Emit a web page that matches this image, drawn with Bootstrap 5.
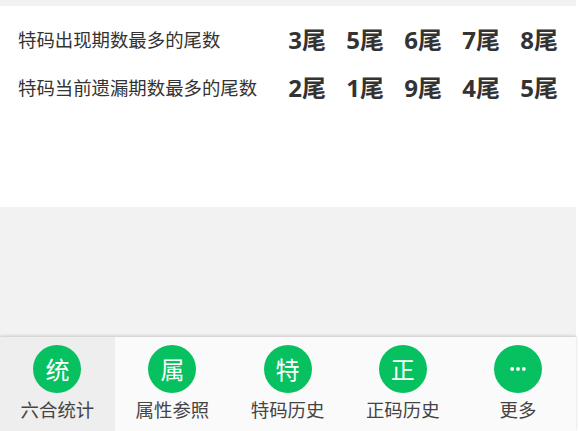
<!DOCTYPE html>
<html lang="zh">
<head>
<meta charset="utf-8">
<link href="https://cdn.jsdelivr.net/npm/bootstrap@5.3.0/dist/css/bootstrap.min.css" rel="stylesheet">
<style>
html, body { height: 100%; overflow: hidden; background: #fff; }
body { font-family: "Noto Sans CJK SC", "Open Sans", sans-serif; color: #333; }
.shell { width: 576px; height: 431px; background: #f2f2f2; }
.panel { margin-top: 6px; height: 201px; background: #fff; padding: 10px 0 0 18px; }
.stat-row { height: 48px; }
.stat-label { font-size: 18.4px; width: 250px; flex: none; }
.stat-vals { font-family: "Open Sans", "Noto Sans CJK SC", sans-serif; font-size: 24px; font-weight: 700; }
.stat-val { width: 58px; flex: none; text-align: right; display: block; }
.tabs { height: 94px; background: #fafafa; box-shadow: 0 -1px 3px rgba(0,0,0,.18); }
.tab-item { width: 115.2px; flex: none; color: #444; font-size: 18.4px; padding-top: 8px; }
.tab-item.is-on { width: 114.8px; background: #eee; }
.tab-dot { width: 48px; height: 48px; background: #07c160; color: #fff; font-size: 24px; margin-bottom: 3px; }
</style>
</head>
<body>
<div class="shell d-flex flex-column">
  <div class="panel">
    <div class="stat-row d-flex align-items-center">
      <div class="stat-label">特码出现期数最多的尾数</div>
      <div class="stat-vals d-flex"><span class="stat-val">3尾</span><span class="stat-val">5尾</span><span class="stat-val">6尾</span><span class="stat-val">7尾</span><span class="stat-val">8尾</span></div>
    </div>
    <div class="stat-row d-flex align-items-center">
      <div class="stat-label">特码当前遗漏期数最多的尾数</div>
      <div class="stat-vals d-flex"><span class="stat-val">2尾</span><span class="stat-val">1尾</span><span class="stat-val">9尾</span><span class="stat-val">4尾</span><span class="stat-val">5尾</span></div>
    </div>
  </div>
  <div class="flex-grow-1"></div>
  <div class="tabs d-flex">
    <div class="tab-item is-on d-flex flex-column align-items-center"><div class="tab-dot rounded-circle d-flex align-items-center justify-content-center">统</div><div>六合统计</div></div>
    <div class="tab-item d-flex flex-column align-items-center"><div class="tab-dot rounded-circle d-flex align-items-center justify-content-center">属</div><div>属性参照</div></div>
    <div class="tab-item d-flex flex-column align-items-center"><div class="tab-dot rounded-circle d-flex align-items-center justify-content-center">特</div><div>特码历史</div></div>
    <div class="tab-item d-flex flex-column align-items-center"><div class="tab-dot rounded-circle d-flex align-items-center justify-content-center">正</div><div>正码历史</div></div>
    <div class="tab-item d-flex flex-column align-items-center"><div class="tab-dot rounded-circle d-flex align-items-center justify-content-center"><svg width="16" height="4" viewBox="0 0 16 4" fill="#fff"><rect x="0.5" y="0.3" width="3.4" height="3.4" rx="1"/><rect x="6.3" y="0.3" width="3.4" height="3.4" rx="1"/><rect x="12.1" y="0.3" width="3.4" height="3.4" rx="1"/></svg></div><div>更多</div></div>
  </div>
</div>
</body>
</html>
